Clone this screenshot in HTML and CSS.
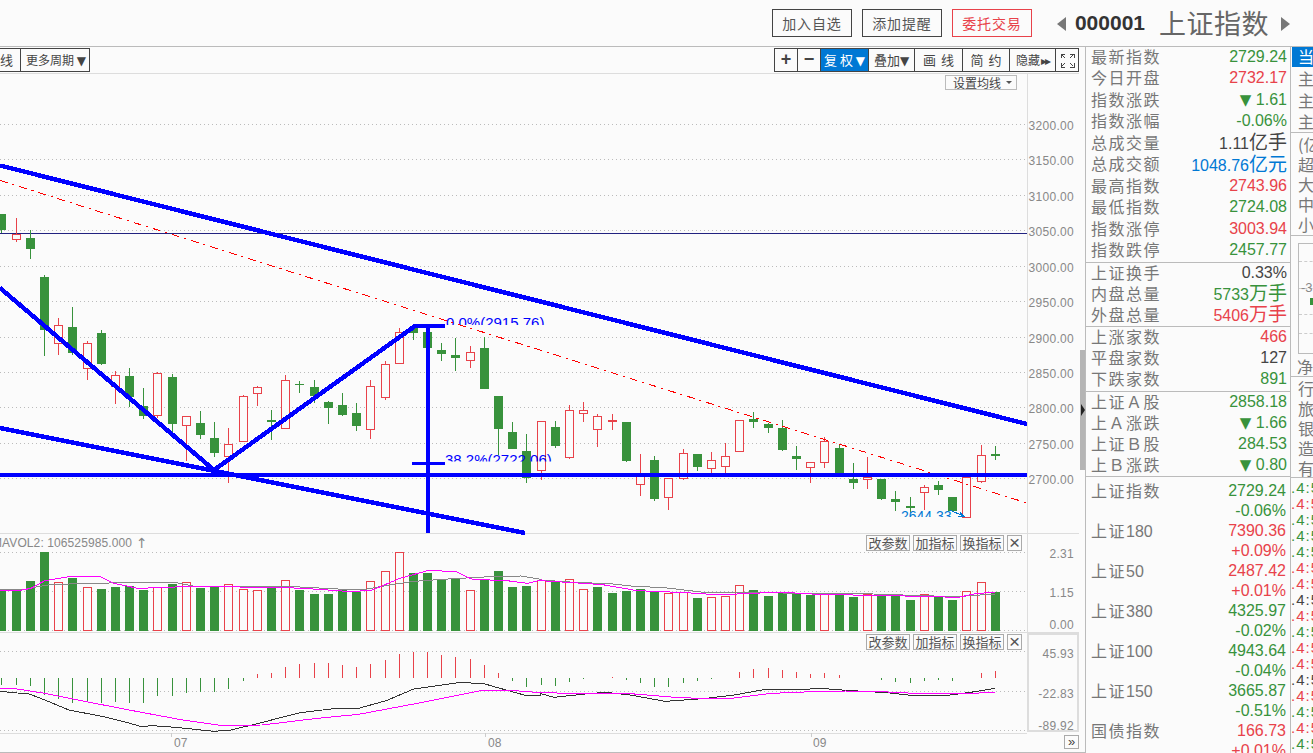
FILE: index.html
```html
<!DOCTYPE html>
<html lang="zh">
<head>
<meta charset="utf-8">
<title>上证指数</title>
<link rel="stylesheet" href="styles.css">
</head>
<body>
<header class="topbar">
  <button class="act">加入自选</button>
  <button class="act">添加提醒</button>
  <button class="act act-red">委托交易</button>
  <span class="nav nav-l"></span>
  <span class="code">000001</span>
  <span class="name">上证指数</span>
  <span class="nav nav-r"></span>
</header>
<main class="main">
  <section class="chart-col">
    <div class="toolbar">
      <div class="tb-left">
        <span class="period period-cut">线</span>
        <span class="period period-more">更多周期 <i class="mini-tri">▼</i></span>
      </div>
      <div class="tb-right">
        <span class="seg w23 sym">+</span>
        <span class="seg w23 sym">−</span>
        <span class="seg w48 on">复 权 <i class="mini-tri">▼</i></span>
        <span class="seg w46">叠加<i class="mini-tri">▼</i></span>
        <span class="seg w48 wide">画 线</span>
        <span class="seg w47 wide">简 约</span>
        <span class="seg w46 small">隐藏<i class="dbl">▸▸</i></span>
        <span class="seg w23">
          <svg class="fs" width="15" height="15" viewBox="0 0 15 15"><path d="M1 5V1H5M10 1H14V5M14 10V14H10M5 14H1V10M2 2L5 5M13 2L10 5M13 13L10 10M2 13L5 10" fill="none" stroke="#444" stroke-width="1" shape-rendering="crispEdges"/></svg>
        </span>
      </div>
    </div>
    <div class="chart-area">
      <svg id="chart" class="chart" width="1085" height="680" viewBox="0 73 1085 680"></svg>
      <span class="ma-btn">设置均线<i class="ma-caret"></i></span>
      <div class="ind-tools ind-vol">
        <span class="ind">改参数</span><span class="ind">加指标</span><span class="ind">换指标</span><span class="ind ind-x">×</span>
      </div>
      <div class="ind-tools ind-macd">
        <span class="ind">改参数</span><span class="ind">加指标</span><span class="ind">换指标</span><span class="ind ind-x">×</span>
      </div>
      <span class="more-btn">»</span>
      <span class="grip"></span>
      <span class="grip-arrow"></span>
    </div>
  </section>

  <aside class="quote">
    <div class="group g1">
      <div class="row"><span class="lab">最新指数</span><span class="g">2729.24</span></div>
      <div class="row"><span class="lab">今日开盘</span><span class="r">2732.17</span></div>
      <div class="row"><span class="lab">指数涨跌</span><span class="g"><i class="tri">▼</i> 1.61</span></div>
      <div class="row"><span class="lab">指数涨幅</span><span class="g">-0.06%</span></div>
      <div class="row"><span class="lab">总成交量</span><span class="k">1.11<i class="unit">亿手</i></span></div>
      <div class="row"><span class="lab">总成交额</span><span class="b">1048.76<i class="unit">亿元</i></span></div>
      <div class="row"><span class="lab">最高指数</span><span class="r">2743.96</span></div>
      <div class="row"><span class="lab">最低指数</span><span class="g">2724.08</span></div>
      <div class="row"><span class="lab">指数涨停</span><span class="r">3003.94</span></div>
      <div class="row"><span class="lab">指数跌停</span><span class="g">2457.77</span></div>
    </div>
    <div class="group g2">
      <div class="row"><span class="lab">上证换手</span><span class="k">0.33%</span></div>
      <div class="row"><span class="lab">内盘总量</span><span class="g">5733<i class="unit">万手</i></span></div>
      <div class="row"><span class="lab">外盘总量</span><span class="r">5406<i class="unit">万手</i></span></div>
    </div>
    <div class="group g3">
      <div class="row"><span class="lab">上涨家数</span><span class="r">466</span></div>
      <div class="row"><span class="lab">平盘家数</span><span class="k">127</span></div>
      <div class="row"><span class="lab">下跌家数</span><span class="g">891</span></div>
    </div>
    <div class="group g4">
      <div class="row"><span class="lab">上证Ａ股</span><span class="g">2858.18</span></div>
      <div class="row"><span class="lab">上Ａ涨跌</span><span class="g"><i class="tri">▼</i> 1.66</span></div>
      <div class="row"><span class="lab">上证Ｂ股</span><span class="g">284.53</span></div>
      <div class="row"><span class="lab">上Ｂ涨跌</span><span class="g"><i class="tri">▼</i> 0.80</span></div>
    </div>
    <div class="group g5">
      <div class="row"><span class="lab">上证指数</span><span class="g">2729.24</span></div>
      <div class="row"><span class="g push">-0.06%</span></div>
      <div class="row"><span class="lab">上证<i class="n">180</i></span><span class="r">7390.36</span></div>
      <div class="row"><span class="r push">+0.09%</span></div>
      <div class="row"><span class="lab">上证<i class="n">50</i></span><span class="r">2487.42</span></div>
      <div class="row"><span class="r push">+0.01%</span></div>
      <div class="row"><span class="lab">上证<i class="n">380</i></span><span class="g">4325.97</span></div>
      <div class="row"><span class="g push">-0.02%</span></div>
      <div class="row"><span class="lab">上证<i class="n">100</i></span><span class="g">4943.64</span></div>
      <div class="row"><span class="g push">-0.04%</span></div>
      <div class="row"><span class="lab">上证<i class="n">150</i></span><span class="g">3665.87</span></div>
      <div class="row"><span class="g push">-0.51%</span></div>
      <div class="row"><span class="lab">国债指数</span><span class="r">166.73</span></div>
      <div class="row"><span class="r push">+0.01%</span></div>
    </div>
  </aside>

  <aside class="side">
    <div class="tab">当日</div>
    <div class="sgroup s1">
      <div class="sline">主力流入</div>
      <div class="sline">主力流出</div>
      <div class="sline">主力净额</div>
    </div>
    <div class="sgroup s2">
      <div class="sline">(亿元)</div>
      <div class="sline">超大单</div>
      <div class="sline">大单</div>
      <div class="sline">中单</div>
      <div class="sline">小单</div>
    </div>
    <div class="flowbox">
      <span class="dash d1"></span><span class="dash d2"></span><span class="dash d3"></span><span class="dash d4"></span>
      <span class="flow-num">-3</span>
      <span class="flow-bar"></span>
    </div>
    <div class="sgroup s3"><div class="sline">净流入</div></div>
    <div class="sgroup s4">
      <div class="sline">行业</div>
      <div class="sline">旅游</div>
      <div class="sline">银行</div>
      <div class="sline">造纸</div>
      <div class="sline">有色</div>
    </div>
    <div class="times">
      <div class="g">.4:59</div><div class="r">.4:59</div><div class="g">.4:59</div><div class="g">.4:59</div>
      <div class="g">.4:59</div><div class="r">.4:59</div><div class="r">.4:59</div><div class="k">.4:59</div>
      <div class="r">.4:59</div><div class="g">.4:59</div><div class="r">.4:59</div><div class="r">.4:59</div>
      <div class="k">.4:59</div><div class="r">.4:59</div><div class="g">.4:59</div><div class="r">.4:59</div>
      <div class="g">.4:59</div>
    </div>
  </aside>
</main>
<script src="chart.js"></script>
</body>
</html>
```

FILE: styles.css
```css
* { box-sizing: border-box; }
html, body { margin: 0; padding: 0; }
body {
  width: 1313px;
  height: 753px;
  overflow: hidden;
  background: #fbfbfb;
  color: #444;
  font-family: "Liberation Sans", "Noto Sans CJK SC", sans-serif;
}
i { font-style: normal; }

/* top bar */
.topbar {
  height: 47px;
  border-bottom: 1px solid #bbb;
  display: flex;
  align-items: flex-start;
  justify-content: flex-end;
  padding: 9px 23px 0 0;
}
.act {
  width: 80px;
  height: 28px;
  margin-left: 10px;
  padding: 0;
  background: transparent;
  border: 1px solid #444;
  border-radius: 0;
  color: #555;
  font: 14px "Noto Sans CJK SC", sans-serif;
  letter-spacing: 0.8px;
}
.act-red { border-color: #e8424a; color: #e8424a; }
.nav { width: 0; height: 0; margin-top: 8px; border-top: 7px solid transparent; border-bottom: 7px solid transparent; }
.nav-l { border-right: 9px solid #777; margin-left: 25px; margin-right: 9px; }
.nav-r { border-left: 9px solid #777; margin-left: 12px; }
.code { font-size: 21px; font-weight: 700; color: #333; line-height: 28px; }
.name { margin-left: 14px; font: 27px/28px "Noto Sans CJK SC", sans-serif; color: #666; letter-spacing: 0.5px; }

.main { display: flex; height: 706px; }

/* chart column */
.chart-col { width: 1085px; flex: none; }
.toolbar {
  height: 26px;
  display: flex;
  justify-content: space-between;
  padding: 1px 6px 1px 0;
}
.tb-left { display: flex; height: 24px; }
.period {
  height: 24px;
  border: 1px solid #444;
  font: 12px/21px "Noto Sans CJK SC", sans-serif;
  color: #444;
  white-space: nowrap;
}
.period-cut { width: 21px; border-left: none; text-align: right; padding-right: 7px; font-size: 13px; }
.period-more { width: 70px; margin-left: -1px; padding-left: 5px; }
.mini-tri { font: 12px "DejaVu Sans", sans-serif; }
.tb-right { display: flex; height: 24px; border: 1px solid #444; border-right: none; }
.seg {
  height: 22px;
  border-right: 1px solid #444;
  font: 13px/21px "Noto Sans CJK SC", sans-serif;
  color: #444;
  text-align: center;
  white-space: nowrap;
  overflow: hidden;
}
.sym { font: 700 18px/21px "Liberation Sans", sans-serif; }
.on { background: #0078d4; color: #fff; }
.wide { word-spacing: 2px; }
.small { font-size: 12px; }
.dbl { font: 12px "DejaVu Sans", sans-serif; letter-spacing: -2px; margin-left: 1px; }
.fs { display: block; margin: 4px auto 0; }
.w23 { width: 23px; }
.w46 { width: 46px; }
.w47 { width: 47px; }
.w48 { width: 48px; }

.chart-area { position: relative; height: 680px; }
.chart { display: block; }
.ax { font: 12px "Liberation Sans", sans-serif; fill: #888; text-anchor: end; letter-spacing: 0.3px; }
.ax-s { font: 12px "Liberation Sans", sans-serif; fill: #888; letter-spacing: 0.1px; }
.ax-arrow { font: 14px "DejaVu Sans", sans-serif; fill: #888; }
.fib { font: 15px "Liberation Sans", sans-serif; fill: #0000ff; }
.lowtxt { font: 14px "Liberation Sans", sans-serif; fill: #0078d4; }

.ma-btn {
  position: absolute;
  left: 945px;
  top: 2px;
  width: 72px;
  height: 15px;
  border: 1px solid #bbb;
  font: 12px/13px "Noto Sans CJK SC", sans-serif;
  color: #444;
  padding-left: 7px;
  white-space: nowrap;
}
.ma-caret {
  position: absolute;
  right: 4px;
  top: 5px;
  width: 0;
  height: 0;
  border: 3px solid transparent;
  border-top: 3px solid #555;
}
.ind-tools { position: absolute; left: 866px; display: flex; gap: 3px; }
.ind-vol { top: 462px; }
.ind-macd { top: 561px; }
.ind {
  width: 44px;
  height: 16px;
  border: 1px solid #aaa;
  font: 13px/14px "Noto Sans CJK SC", sans-serif;
  color: #555;
  text-align: center;
  background: #fbfbfb;
  white-space: nowrap;
}
.ind-x { width: 15px; font: 19px/13px "Liberation Sans", sans-serif; }
.more-btn {
  position: absolute;
  left: 1064px;
  top: 662px;
  width: 15px;
  height: 14px;
  border: 1px solid #aaa;
  font: 13px/11px "Liberation Sans", sans-serif;
  color: #444;
  text-align: center;
}
.grip { position: absolute; left: 1080px; top: 277px; width: 5px; height: 120px; background: #b5b5b5; }
.grip-arrow {
  position: absolute;
  left: 1081px;
  top: 331px;
  width: 0;
  height: 0;
  border-top: 6px solid transparent;
  border-bottom: 6px solid transparent;
  border-left: 4px solid #222;
}

/* quote panel */
.quote {
  width: 206px;
  flex: none;
  border-left: 1px solid #bbb;
  border-right: 1px solid #bbb;
  overflow: hidden;
}
.group { border-bottom: 1px solid #bbb; padding: 0 3px 0 5px; }
.g1 .row { height: 21.5px; }
.g2 .row { height: 21px; }
.g3 .row { height: 21.33px; }
.g4 { padding-top: 1px; }
.g4 .row { height: 20.75px; }
.g5 { border-bottom: none; padding: 5px 4px 0 5px; }
.g5 .row { height: 20px; }
.row {
  display: flex;
  justify-content: space-between;
  align-items: center;
  font-size: 16px;
  white-space: nowrap;
  padding-bottom: 2px;
}
.lab { color: #777; letter-spacing: 1.5px; padding-bottom: 2px; font-family: "Liberation Sans", "Noto Sans CJK SC", sans-serif; }
.n { letter-spacing: 0; }
.push { margin-left: auto; }
.g { color: #38923c; }
.r { color: #e8424a; }
.k { color: #444; }
.b { color: #0078d4; }
.unit { font-size: 19px; font-family: "Noto Sans CJK SC", sans-serif; line-height: 18px; }
.tri { font: 15px/16px "DejaVu Sans", sans-serif; }

/* clipped side column */
.side { width: 22px; flex: none; overflow: hidden; font: 16px "Noto Sans CJK SC", sans-serif; }
.tab {
  margin-left: 1px;
  height: 20px;
  width: 40px;
  background: #0078d4;
  color: #fff;
  font-size: 16px;
  line-height: 19px;
  padding-left: 6px;
  white-space: nowrap;
}
.sgroup { border-bottom: 1px solid #bbb; }
.sline { padding-left: 7px; color: #777; white-space: nowrap; width: 80px; }
.s1 { height: 66px; padding-top: 1px; }
.s1 .sline { height: 21.5px; line-height: 21.5px; }
.s2 { height: 103px; padding-top: 1px; }
.s2 .sline { height: 20px; line-height: 20px; }
.flowbox {
  position: relative;
  margin: 7px 0 0 7px;
  width: 40px;
  height: 111px;
  border: 1px solid #bbb;
}
.dash { position: absolute; left: 0; width: 40px; border-top: 1px dashed #ccc; }
.d1 { top: 17px; }
.d2 { top: 44px; }
.d3 { top: 70px; }
.d4 { top: 89px; }
.flow-num { position: absolute; left: 2px; top: 37px; font: 13px/14px "Liberation Sans", sans-serif; color: #888; }
.flow-bar { position: absolute; left: 11px; top: 54px; width: 4px; height: 7px; background: #38923c; }
.s3 { height: 23px; }
.s3 .sline { line-height: 24px; padding-left: 6px; }
.s4 { height: 101px; padding-top: 1px; }
.s4 .sline { height: 20px; line-height: 21px; }
.times { padding-top: 2px; }
.times div { height: 16px; font: 15px/16px "Liberation Sans", sans-serif; letter-spacing: 1px; white-space: nowrap; width: 60px; }
```

FILE: chart.js
```js
(function () {
  var GREEN = '#38923c', RED = '#e8424a', BG = '#fbfbfb';
  var out = [];

  function X(i) { return Math.floor(1.9 + 14.19 * i); }
  function rect(x, y, w, h, fill) {
    out.push('<rect x="' + x + '" y="' + y + '" width="' + w + '" height="' + h + '" fill="' + fill +
      '" shape-rendering="crispEdges"/>');
  }
  function line(x1, y1, x2, y2, color, w, dash) {
    out.push('<line x1="' + x1 + '" y1="' + y1 + '" x2="' + x2 + '" y2="' + y2 + '" stroke="' + color +
      '" stroke-width="' + (w || 1) + '"' + (dash ? ' stroke-dasharray="' + dash + '"' : '') +
      ' shape-rendering="crispEdges"/>');
  }
  function poly(points, color) {
    out.push('<polyline points="' + points.join(' ') + '" fill="none" stroke="' + color +
      '" stroke-width="1" shape-rendering="crispEdges"/>');
  }
  function text(cls, x, y, s) {
    out.push('<text class="' + cls + '" x="' + x + '" y="' + y + '">' + s + '</text>');
  }
  function candleBody(i, top, bottom, color) {
    var x = X(i) - 4, h = Math.max(bottom - top, 1);
    if (color === 'g') {
      rect(x, top, 9, h, GREEN);
    } else {
      rect(x, top, 9, h + 1, RED);
      if (h > 1) rect(x + 1, top + 1, 7, h - 1, BG);
    }
  }

  /* frame */
  line(0, 73.5, 1079, 73.5, '#ddd');
  line(0, 533.5, 1079, 533.5, '#ddd');
  line(0, 632.5, 1079, 632.5, '#ddd');
  line(0, 733.5, 1027, 733.5, '#ddd');
  line(0, 752, 1085, 752, '#bbb');
  line(1027.5, 73, 1027.5, 633, '#ddd');
  out.push('<rect x="1028" y="634" width="50" height="97" fill="none" stroke="#ddd" stroke-width="2" shape-rendering="crispEdges"/>');

  /* price grid */
  var prices = ['3200.00','3150.00','3100.00','3050.00','3000.00','2950.00','2900.00','2850.00','2800.00','2750.00','2700.00'];
  prices.forEach(function (p, k) {
    var y = Math.round(124 + 35.42 * k);
    line(0, y + 0.5, 1027, y + 0.5, '#bbb', 1, '1 3');
    text('ax', 1074, y + 6, p);
  });
  line(0, 233.5, 1027, 233.5, '#222280');

  /* candles: [wickTop, wickBottom, bodyTop, bodyBottom, colour] */
  var candles = [
    [214,233,214,230,'g'],[218,242,234,239,'r'],[230,259,238,249,'g'],[275,356,277,330,'g'],
    [318,355,325,343,'r'],[307,355,327,353,'g'],[341,380,343,368,'r'],[330,365,333,364,'g'],
    [371,404,375,386,'r'],[368,407,376,397,'g'],[388,419,406,416,'g'],[372,418,373,415,'r'],
    [374,437,377,424,'g'],[416,461,416,425,'r'],[411,439,423,435,'g'],[422,457,438,453,'g'],
    [428,483,444,456,'r'],[395,441,396,441,'r'],[386,406,387,393,'r'],[410,440,420,422,'g'],
    [375,428,380,428,'r'],[381,393,384,385,'g'],[380,403,387,396,'g'],[401,424,402,408,'g'],
    [393,416,405,415,'g'],[403,431,413,426,'g'],[380,439,386,429,'r'],[361,400,364,397,'r'],
    [328,363,332,363,'r'],[330,340,328,333,'g'],[332,348,332,348,'g'],[343,361,350,354,'g'],
    [338,371,355,358,'g'],[346,368,352,360,'r'],[337,389,348,389,'g'],[396,455,396,429,'g'],
    [422,449,432,449,'g'],[434,483,451,478,'g'],[421,480,421,470,'r'],[421,448,427,446,'g'],
    [405,459,410,457,'r'],[402,422,410,413,'r'],[414,447,416,429,'r'],[414,430,420,421,'r'],
    [422,462,422,461,'g'],[454,496,476,484,'r'],[456,501,460,499,'g'],[478,510,478,497,'r'],
    [449,480,453,478,'r'],[454,471,454,467,'g'],[452,474,460,468,'r'],[443,473,456,466,'r'],
    [420,451,420,451,'r'],[412,428,419,422,'g'],[423,433,424,428,'g'],[420,451,428,450,'g'],
    [446,470,456,459,'g'],[462,483,462,467,'r'],[437,468,441,462,'r'],[444,474,448,474,'g'],
    [463,489,479,483,'g'],[457,489,477,479,'r'],[479,500,479,499,'g'],[491,511,499,502,'g'],
    [497,513,506,508,'g'],[485,510,487,492,'r'],[481,495,485,490,'g'],[497,511,497,511,'g'],
    [477,517,477,517,'r'],[445,483,455,481,'r'],[446,460,454,456,'g']
  ];
  candles.forEach(function (c, i) {
    rect(X(i), c[0], 1, c[1] - c[0], c[4] === 'g' ? GREEN : RED);
    candleBody(i, c[2], c[3], c[4]);
  });

  /* fib labels, clipped along their lower edge */
  out.push('<defs><clipPath id="c1"><rect x="440" y="310" width="120" height="15"/></clipPath>' +
    '<clipPath id="c2"><rect x="440" y="445" width="120" height="16.5"/></clipPath>' +
    '<clipPath id="c3"><rect x="895" y="500" width="70" height="17"/></clipPath></defs>');
  out.push('<g clip-path="url(#c1)"><text class="fib" x="446" y="328">0.0%(2915.76)</text></g>');
  out.push('<g clip-path="url(#c2)"><text class="fib" x="445" y="465">38.2%(2722.06)</text></g>');
  out.push('<g clip-path="url(#c3)"><text class="lowtxt" x="901" y="521">2644.33</text></g>');
  out.push('<path d="M950 510L962 515.5M958 516.5H964L960 512.5" stroke="#0078d4" fill="none" stroke-width="1" shape-rendering="crispEdges"/>');

  /* trend lines */
  line(0, 180.5, 1027, 503, '#ff0000', 1, '8 5 2 5');
  line(0, 165.5, 1027, 424, '#0000ff', 4.5);
  line(0, 428, 525, 533, '#0000ff', 4.5);
  line(0, 288, 214, 470, '#0000ff', 4.5);
  line(214, 470, 415, 326, '#0000ff', 4.5);
  line(414, 326, 445, 326, '#0000ff', 4);
  line(428, 326, 428, 533, '#0000ff', 4);
  line(412, 463, 445, 463, '#0000ff', 3);
  line(0, 475, 1027, 475, '#0000ff', 4);

  /* volume */
  [[552,'2.31',558],[591,'1.15',597],[630,'0.00',629]].forEach(function (a) {
    line(0, a[0] + 0.5, 1027, a[0] + 0.5, '#bbb', 1, '1 3');
    text('ax', 1074, a[2], a[1]);
  });
  text('ax-s', -8, 547, 'MAVOL2: 106525985.000');
  text('ax-arrow', 136, 548, '↑');

  var volTops = [176,183,153,66,155,144,172,177,171,167,180,172,162,157,174,168,163,178,181,172,151,180,192,192,178,187,154,124,67,130,129,151,145,181,148,123,171,168,150,
    153,148,178,171,189,183,178,185,190,186,204,202,199,166,180,198,188,188,194,190,194,201,192,194,198,210,193,200,209,184,157,186];
  var volColors = ['g','g','g','g','r','g','r','g','g','g','g','r','g','r','g','g','r','r','r','g','r','g','g','g','g','g','r','r','r','g','g','g','g','r','g','g','g','g','r',
    'g','r','r','g','g','g','g','g','r','r','g','r','r','r','g','g','g','g','g','r','g','g','r','g','g','g','r','g','g','r','r','g'];
  volTops.forEach(function (t, i) {
    candleBody(i, Math.round(530 + t / 3), volColors[i] === 'g' ? 631 : 630, volColors[i]);
  });

  function z9(p) { return (p[0] / 2.9) + ',' + (530 + p[1] / 3); }
  function z10(p) { return (540 + p[0] / 2.88) + ',' + (530 + p[1] / 3); }
  function path2(a, b) { return a.map(z9).concat(b.map(z10)); }

  poly(path2(
    [[0,177],[60,180],[100,172],[150,163],[250,161],[350,158],[510,158],[560,168],[720,170],[850,170],[1000,178],[1060,178],[1130,165],[1200,154],[1300,147],[1420,140],[1510,138],[1568,148]],
    [[0,150],[100,157],[200,161],[280,170],[350,172],[480,188],[600,188],[800,190],[960,192],[1100,197],[1200,200],[1310,192]]
  ), '#888');
  poly(path2(
    [[0,180],[60,181],[90,175],[130,152],[200,140],[290,140],[330,160],[400,175],[490,172],[560,168],[660,168],[720,173],[800,172],[880,175],[1020,185],[1080,180],[1160,145],[1240,122],[1320,124],[1370,148],[1470,152],[1530,160],[1568,150]],
    [[0,152],[80,157],[180,164],[280,182],[420,188],[520,195],[600,190],[700,187],[800,193],[950,196],[1050,198],[1150,200],[1200,203],[1250,192],[1310,186]]
  ), '#ff00ff');

  /* MACD */
  [[651,'45.93',658],[691,'-22.83',698],[730,'-89.92',730]].forEach(function (a) {
    line(0, a[0] + 0.5, 1027, a[0] + 0.5, '#bbb', 1, '1 3');
    text('ax', 1074, a[2], a[1]);
  });
  var hist = [465,465,467,495,506,518,516,519,516,519,519,498,498,488,486,485,477,453,432,428,411,402,399,399,405,411,402,390,372,366,366,376,381,387,405,429,
    453,471,465,468,456,447,443,441,451,459,471,471,459,453,447,443,426,417,413,420,426,432,429,435,444,445,450,456,459,453,450,453,444,429,423];
  hist.forEach(function (v, i) {
    var y = Math.round(530 + v / 3), base = 678;
    if (y === base) return;
    if (y > base) rect(X(i), base, 1, y - base, GREEN);
    else rect(X(i), y, 1, base - y, RED);
  });
  poly(path2(
    [[0,484],[50,489],[80,490],[130,510],[200,540],[300,560],[360,575],[410,590],[440,587],[510,592],[620,604],[670,600],[750,580],[870,548],[960,537],[1040,535],[1120,512],[1200,477],[1330,458],[1400,460],[1450,475],[1520,495],[1568,497]],
    [[0,490],[40,502],[140,491],[190,487],[260,495],[360,514],[470,506],[560,495],[650,478],[760,478],[810,475],[880,481],[1000,488],[1060,495],[1180,495],[1240,487],[1310,475]]
  ), '#333');
  poly(path2(
    [[0,476],[50,477],[130,490],[250,515],[400,545],[530,570],[640,586],[760,585],[920,565],[1040,553],[1200,522],[1400,481],[1480,481],[1568,488]],
    [[0,488],[140,491],[260,491],[390,502],[480,506],[550,505],[650,492],[720,487],[880,483],[1040,487],[1090,492],[1220,491],[1310,487]]
  ), '#ff00ff');

  /* time axis */
  [[171,'07',174],[485,'08',488],[811,'09',813]].forEach(function (a) {
    rect(a[0], 733, 1, 4, '#ccc');
    text('ax-s', a[2], 747, a[1]);
  });

  document.getElementById('chart').innerHTML = out.join('');
})();
```
